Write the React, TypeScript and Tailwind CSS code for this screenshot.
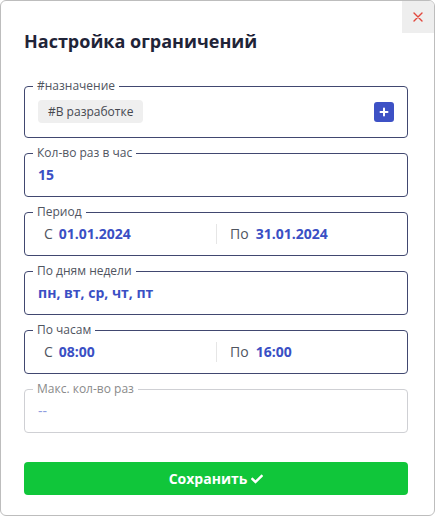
import React from "react";
import { FaCheck } from "react-icons/fa";

function Field({
  label,
  children,
  muted = false,
  first = false,
}: {
  label: string;
  children: React.ReactNode;
  muted?: boolean;
  first?: boolean;
}) {
  return (
    <fieldset
      className={
        "m-0 min-w-0 rounded-[4px] border px-[13px] " +
        (muted ? "border-[#cfd0d4] " : "border-[#414870] ") +
        (first ? "pt-[5px] pb-[14px]" : "pt-[3px] pb-[11px]")
      }
    >
      <legend
        className={
          "ml-[-5px] px-[4px] text-[12px] leading-[18px] " +
          (muted ? "text-[#8a8a8a]" : "text-[#50555f]")
        }
      >
        {label}
      </legend>
      {children}
    </fieldset>
  );
}

function Range({ from, to }: { from: string; to: string }) {
  return (
    <div className="grid grid-cols-2 text-[14px] leading-[20px]">
      <div className="flex items-center gap-[6px] pl-[6px]">
        <span className="text-[#50555f]">С</span>
        <span className="font-bold text-[#3a4fc4]">{from}</span>
      </div>
      <div className="flex items-center gap-[7px] border-l border-[#e6e6e6] pl-[13px]">
        <span className="text-[#50555f]">По</span>
        <span className="font-bold text-[#3a4fc4]">{to}</span>
      </div>
    </div>
  );
}

export default function App() {
  return (
    <div
      className="relative flex h-[516px] w-[435px] flex-col overflow-hidden rounded-[6px] border border-[#bdbdbd] bg-white pl-[23px] pr-[26px] pt-[26px]"
      style={{ fontFamily: '"Open Sans", "Noto Sans", sans-serif' }}
    >
      <button className="absolute right-0 top-0 flex h-[32px] w-[32px] items-center justify-center bg-[#eeeeee]">
        <svg width="10" height="10" viewBox="0 0 10 10">
          <path d="M1 1L9 9M9 1L1 9" stroke="#e2473d" strokeWidth="1.4" strokeLinecap="round" />
        </svg>
      </button>

      <h1 className="m-0 text-[18px] font-bold leading-[28px] text-[#1f2438]">
        Настройка ограничений
      </h1>

      <div className="mt-[22px] flex flex-col gap-[6px]">
        <Field label="#назначение" first>
          <div className="flex items-center justify-between">
            <span className="flex h-[23px] items-center rounded-[4px] bg-[#efefef] px-[10px] text-[12px] text-[#45484f]">
              #В разработке
            </span>
            <button className="flex h-[20px] w-[20px] items-center justify-center rounded-[3px] bg-[#3d51c5]">
              <svg width="10" height="10" viewBox="0 0 10 10">
                <path d="M5 1.5V8.5M1.5 5H8.5" stroke="white" strokeWidth="2" strokeLinecap="round" />
              </svg>
            </button>
          </div>
        </Field>

        <Field label="Кол-во раз в час">
          <div className="text-[14px] font-bold leading-[20px] text-[#3a4fc4]">15</div>
        </Field>

        <Field label="Период">
          <Range from="01.01.2024" to="31.01.2024" />
        </Field>

        <Field label="По дням недели">
          <div className="text-[14px] font-bold leading-[20px] text-[#3a4fc4]">
            пн, вт, ср, чт, пт
          </div>
        </Field>

        <Field label="По часам">
          <Range from="08:00" to="16:00" />
        </Field>

        <Field label="Макс. кол-во раз" muted>
          <div className="text-[14px] leading-[20px] text-[#8e9ce0]">--</div>
        </Field>
      </div>

      <button className="mt-[29px] flex h-[33px] w-full items-center justify-center gap-[4px] rounded-[4px] bg-[#10c63a] text-[14px] font-bold text-white">
        Сохранить
        <FaCheck size={12} />
      </button>
    </div>
  );
}
